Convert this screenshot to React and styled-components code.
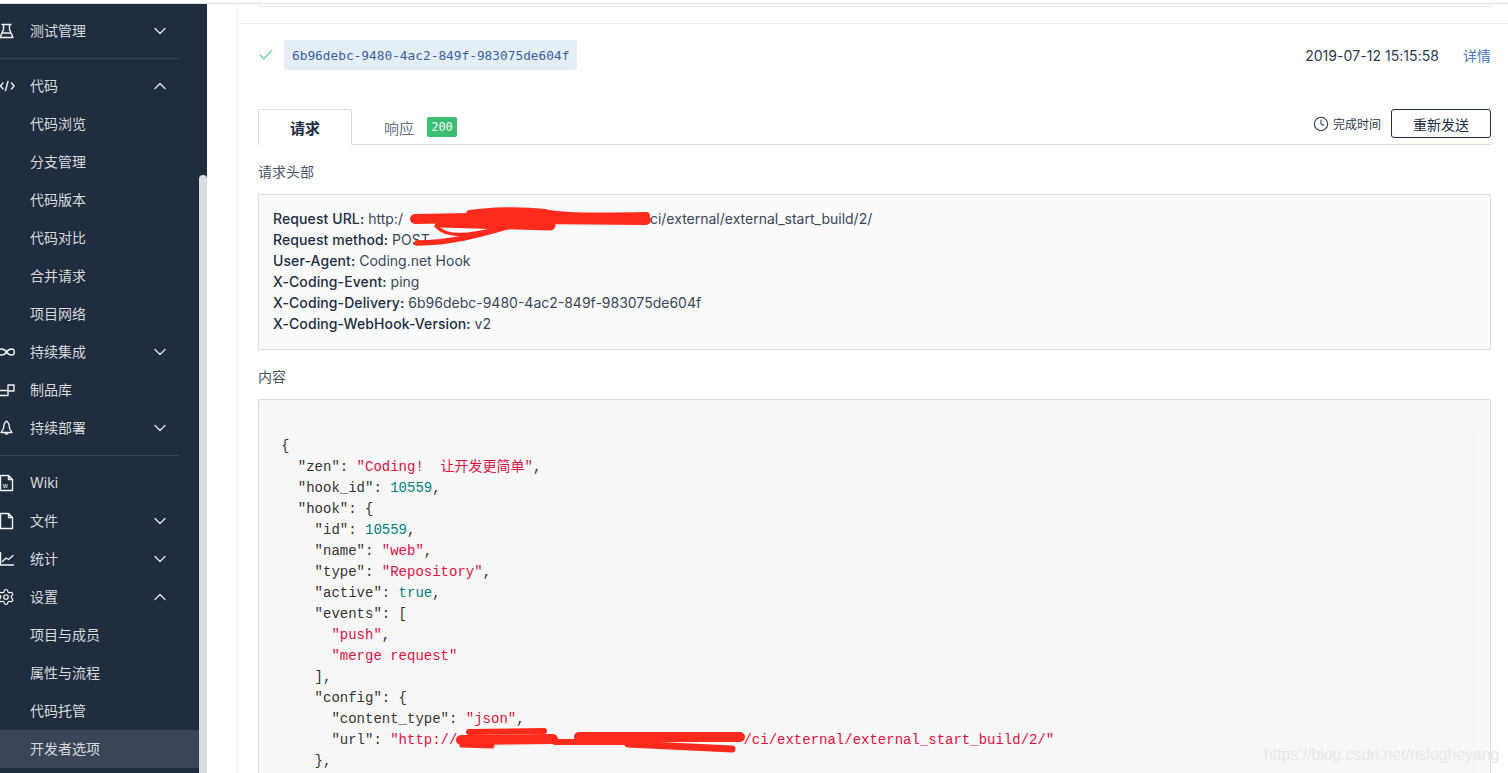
import React from 'react';
import styled, { createGlobalStyle } from 'styled-components';
import { Check, ChevronDown, ChevronUp, Clock, Settings } from 'lucide-react';

const GlobalStyle = createGlobalStyle`
    html, body {
        margin: 0;
        padding: 0;
        height: 773px;
        overflow: hidden;
        background: #fff;
    }
    * {
        box-sizing: border-box;
    }
    body {
        font-family: Inter, "Noto Sans CJK SC", sans-serif;
        color: #2c3a4d;
    }
`;

const Page = styled.div`
    position: relative;
    display: flex;
    flex-direction: column;
    width: 1508px;
    height: 773px;
    overflow: hidden;
`;

const TopEdge = styled.div`
    flex: none;
    height: 4px;
    border-bottom: 1px solid #e1e3e7;
`;

const Body = styled.div`
    flex: 1;
    display: flex;
    min-height: 0;
`;

const Sidebar = styled.aside`
    flex: none;
    display: flex;
    width: 207px;
    background: #202d3f;
`;

const Nav = styled.nav`
    flex: 1;
    padding-top: 8px;
    min-width: 0;
`;

const ScrollTrack = styled.div`
    flex: none;
    width: 8px;
    padding-top: 171px;
`;

const ScrollThumb = styled.div`
    height: 100%;
    background: #d9dde3;
    border-radius: 4px 4px 0 0;
`;

const NavRow = styled.div`
    display: flex;
    align-items: center;
    height: 38px;
    padding-right: 29px;
    font-size: 14px;
    color: #d6dade;
    background: ${p => (p.$active ? '#3a4658' : 'transparent')};
`;

const NavIcon = styled.span`
    flex: none;
    display: flex;
    width: 18px;
    height: 18px;
    margin-left: -3px;
    margin-right: 15px;
    color: #f1f3f5;
`;

const NavIndent = styled.span`
    flex: none;
    width: 30px;
`;

const NavLabel = styled.span`
    flex: 1;
    padding-bottom: 2px;
`;

const NavDivider = styled.div`
    width: 179px;
    height: 1px;
    margin: 8px 0;
    background: #3a4657;
`;

const Main = styled.main`
    flex: 1;
    min-width: 0;
    margin-left: 30px;
    border-left: 1px solid #f1f2f4;
`;

const PrevCardEnd = styled.div`
    height: 3px;
    margin: 0 17px 0 20px;
    border: 1px solid #e3e6ea;
    border-top: none;
    border-radius: 0 0 2px 2px;
`;

const RowDivider = styled.div`
    height: 1px;
    margin-top: 16px;
    background: #f1f2f4;
`;

const Content = styled.div`
    padding: 0 17px 0 20px;
`;

const DeliveryRow = styled.div`
    display: flex;
    align-items: center;
    padding: 16px 0 39px;
`;

const StatusCheck = styled(Check)`
    flex: none;
    margin-left: -1px;
    margin-right: 9px;
    color: #32c27a;
`;

const DeliveryId = styled.code`
    display: flex;
    align-items: center;
    height: 30px;
    padding: 0 8px;
    border-radius: 2px;
    background: #e4eef8;
    color: #3d5f9f;
    font-family: "DejaVu Sans Mono", monospace;
    font-size: 12.8px;
`;

const DeliveryTime = styled.span`
    margin-left: auto;
    font-size: 14px;
    letter-spacing: 0.05px;
    color: #2c3a4d;
`;

const DetailLink = styled.a`
    margin-left: 24px;
    font-size: 14px;
    color: #4a78b8;
`;

const TabBar = styled.div`
    display: flex;
    align-items: flex-start;
    height: 36px;
    border-bottom: 1px solid #d8dde4;
`;

const ActiveTab = styled.div`
    display: flex;
    align-items: center;
    justify-content: center;
    width: 94px;
    height: 36px;
    border: 1px solid #d8dde4;
    border-bottom: 1px solid #fff;
    border-radius: 2px 2px 0 0;
    background: #fff;
    font-size: 15px;
    font-weight: 700;
    color: #202d3f;
`;

const Tab = styled.div`
    display: flex;
    align-items: center;
    gap: 13px;
    height: 36px;
    padding-left: 32px;
    font-size: 15px;
    color: #6b7480;
`;

const StatusBadge = styled.span`
    display: flex;
    align-items: center;
    justify-content: center;
    width: 30px;
    height: 20px;
    border-radius: 2px;
    background: #3bbd73;
    color: #f2fbf6;
    font-family: "DejaVu Sans Mono", monospace;
    font-size: 12px;
`;

const TabActions = styled.div`
    display: flex;
    align-items: center;
    margin-left: auto;
    height: 29px;
`;

const FinishTime = styled.span`
    display: flex;
    align-items: center;
    gap: 4px;
    font-size: 12px;
    color: #2c3a4d;
`;

const ResendButton = styled.button`
    width: 100px;
    height: 29px;
    margin-left: 10px;
    border: 1px solid #202d3f;
    border-radius: 3px;
    background: #fff;
    font-family: inherit;
    font-size: 14px;
    color: #202d3f;
`;

const SectionLabel = styled.div`
    margin: 17px 0 12px;
    font-size: 14px;
    line-height: 20px;
    color: #4a5565;
`;

const HeaderBox = styled.div`
    position: relative;
    height: 156px;
    padding: 13px 14px;
    border: 1px solid #dadfe6;
    border-radius: 2px;
    background: #f9fafb;
`;

const HeaderLine = styled.div`
    font-size: 14px;
    line-height: 21px;
    color: #3a4656;
    white-space: nowrap;
`;

const HeaderName = styled.b`
    font-weight: 500;
    letter-spacing: 0.1px;
    color: #202d3f;
`;

const Hidden = styled.span`
    display: inline-block;
    width: ${p => p.$w}px;
`;

const CodeBox = styled.div`
    position: relative;
    height: 500px;
    padding: 28px 14px 14px;
    border: 1px solid #dadfe6;
    border-radius: 2px;
    background: #f8f8f8;
`;

const CodeBlock = styled.div`
    padding: 8px;
    background: #f7f7f7;
    font-family: "Liberation Mono", "Noto Sans CJK SC", monospace;
    font-size: 14px;
    color: #333;
`;

const CodeLine = styled.div`
    height: 21px;
    line-height: 21px;
    padding-left: ${p => p.$indent * 8.4}px;
    white-space: pre;
`;

const Str = styled.span`
    color: #dd1144;
`;

const Num = styled.span`
    color: #008080;
`;

const Scribble = styled.svg`
    position: absolute;
    left: ${p => p.$x}px;
    top: ${p => p.$y}px;
    fill: none;
    stroke: #fe2a1c;
    stroke-linecap: round;
    stroke-linejoin: round;
`;

const Watermark = styled.div`
    position: absolute;
    left: 1264px;
    top: 746px;
    font-family: "Liberation Sans", sans-serif;
    font-size: 15.8px;
    line-height: 18px;
    color: #e7e7e7;
    white-space: nowrap;
`;

const Svg = ({ children }) => (
    <svg width="18" height="18" viewBox="0 0 18 18" fill="none" stroke="currentColor" strokeWidth="1.4" strokeLinecap="round" strokeLinejoin="round">
        {children}
    </svg>
);

const icons = {
    flask: <Svg><path d="M5 2.500h9M6.500 2.500v5L3 15.500h13L12.500 7.500v-5M5 11h9" /></Svg>,
    code: <Svg><path d="M6 6L3.500 9 6 12M14.500 6L17 9l-2.500 3M11 4.500L8.500 13.500" /></Svg>,
    loop: <Svg><path d="M9.500 9C8 6.800 6.500 6 4.500 6a3 3 0 0 0 0 6c2 0 3.500-.800 5-3 1.500-2.200 3-3 5-3a3 3 0 0 1 0 6c-2 0-3.500-.800-5-3z" /></Svg>,
    box: <Svg><path d="M11 4h6v6h-6zM1 9.500h10v5H1z" /></Svg>,
    rocket: <Svg><path d="M9.500 2C7 4 6.500 7 6.500 9.500L4 13.500h11L12.500 9.500C12.500 7 12 4 9.500 2zM8 13.500a1.500 1.500 0 0 0 3 0" /></Svg>,
    wiki: (
        <Svg>
            <path d="M3.500 1.500h8l4 4v11h-12zM11.500 1.500v4h4" />
            <text x="5.800" y="13.500" fontSize="7" fontFamily="Liberation Sans" fill="currentColor" stroke="none">w</text>
        </Svg>
    ),
    file: <Svg><path d="M3.500 1.500h8l4 4v11h-12zM11.500 1.500v4h4" /></Svg>,
    chart: <Svg><path d="M3.500 2.500v12.500h13M5.500 11.500l3.500-3.500 2.500 1.500 4.500-4" /></Svg>,
    gear: <Settings size={18} strokeWidth={1.6} />,
};

const navGroups = [
    [{ label: '测试管理', icon: 'flask', arrow: 'down' }],
    [
        { label: '代码', icon: 'code', arrow: 'up' },
        { label: '代码浏览' },
        { label: '分支管理' },
        { label: '代码版本' },
        { label: '代码对比' },
        { label: '合并请求' },
        { label: '项目网络' },
        { label: '持续集成', icon: 'loop', arrow: 'down' },
        { label: '制品库', icon: 'box' },
        { label: '持续部署', icon: 'rocket', arrow: 'down' },
    ],
    [
        { label: 'Wiki', icon: 'wiki' },
        { label: '文件', icon: 'file', arrow: 'down' },
        { label: '统计', icon: 'chart', arrow: 'down' },
        { label: '设置', icon: 'gear', arrow: 'up' },
        { label: '项目与成员' },
        { label: '属性与流程' },
        { label: '代码托管' },
        { label: '开发者选项', active: true },
    ],
];

const NavItem = ({ item }) => (
    <NavRow $active={item.active}>
        {item.icon ? <NavIcon>{icons[item.icon]}</NavIcon> : <NavIndent />}
        <NavLabel>{item.label}</NavLabel>
        {item.arrow === 'down' && <ChevronDown size={20} strokeWidth={1.8} />}
        {item.arrow === 'up' && <ChevronUp size={20} strokeWidth={1.8} />}
    </NavRow>
);

const App = () => (
    <Page>
        <GlobalStyle />
        <TopEdge />
        <Body>
            <Sidebar>
                <Nav>
                    {navGroups.map((group, i) => (
                        <React.Fragment key={i}>
                            {i > 0 && <NavDivider />}
                            {group.map(item => <NavItem key={item.label} item={item} />)}
                        </React.Fragment>
                    ))}
                </Nav>
                <ScrollTrack><ScrollThumb /></ScrollTrack>
            </Sidebar>
            <Main>
                <PrevCardEnd />
                <RowDivider />
                <Content>
                    <DeliveryRow>
                        <StatusCheck size={18} strokeWidth={1.4} />
                        <DeliveryId>6b96debc-9480-4ac2-849f-983075de604f</DeliveryId>
                        <DeliveryTime>2019-07-12 15:15:58</DeliveryTime>
                        <DetailLink>详情</DetailLink>
                    </DeliveryRow>
                    <TabBar>
                        <ActiveTab>请求</ActiveTab>
                        <Tab>响应<StatusBadge>200</StatusBadge></Tab>
                        <TabActions>
                            <FinishTime><Clock size={16} strokeWidth={1.6} />完成时间</FinishTime>
                            <ResendButton>重新发送</ResendButton>
                        </TabActions>
                    </TabBar>
                    <SectionLabel>请求头部</SectionLabel>
                    <HeaderBox>
                        <HeaderLine><HeaderName>Request URL:</HeaderName> http:/<Hidden $w={247} />ci/external/external_start_build/2/</HeaderLine>
                        <HeaderLine><HeaderName>Request method:</HeaderName> POST</HeaderLine>
                        <HeaderLine><HeaderName>User-Agent:</HeaderName> Coding.net Hook</HeaderLine>
                        <HeaderLine><HeaderName>X-Coding-Event:</HeaderName> ping</HeaderLine>
                        <HeaderLine><HeaderName>X-Coding-Delivery:</HeaderName> 6b96debc-9480-4ac2-849f-983075de604f</HeaderLine>
                        <HeaderLine><HeaderName>X-Coding-WebHook-Version:</HeaderName> v2</HeaderLine>
                        <Scribble $x={147} $y={9} width="254" height="42" viewBox="406 204 254 42">
                            <path strokeWidth="10" d="M415 219L470 218L530 219L646 220" />
                            <path strokeWidth="8" d="M470 214C490 211 520 210 545 213C560 217 600 217 646 216" />
                            <path strokeWidth="11" d="M440 222L550 225" />
                            <path strokeWidth="3.500" d="M436 226C445 237 465 237 495 229" />
                            <path strokeWidth="5.500" d="M417 243C450 243 480 235 510 226" />
                        </Scribble>
                    </HeaderBox>
                    <SectionLabel>内容</SectionLabel>
                    <CodeBox>
                        <CodeBlock>
                            <CodeLine $indent={0}>{'{'}</CodeLine>
                            <CodeLine $indent={2}>"zen": <Str>"Coding!  让开发更简单"</Str>,</CodeLine>
                            <CodeLine $indent={2}>"hook_id": <Num>10559</Num>,</CodeLine>
                            <CodeLine $indent={2}>"hook": {'{'}</CodeLine>
                            <CodeLine $indent={4}>"id": <Num>10559</Num>,</CodeLine>
                            <CodeLine $indent={4}>"name": <Str>"web"</Str>,</CodeLine>
                            <CodeLine $indent={4}>"type": <Str>"Repository"</Str>,</CodeLine>
                            <CodeLine $indent={4}>"active": <Num>true</Num>,</CodeLine>
                            <CodeLine $indent={4}>"events": [</CodeLine>
                            <CodeLine $indent={6}><Str>"push"</Str>,</CodeLine>
                            <CodeLine $indent={6}><Str>"merge request"</Str></CodeLine>
                            <CodeLine $indent={4}>],</CodeLine>
                            <CodeLine $indent={4}>"config": {'{'}</CodeLine>
                            <CodeLine $indent={6}>"content_type": <Str>"json"</Str>,</CodeLine>
                            <CodeLine $indent={6}>"url": <Str>"http://<Hidden $w={286} />/ci/external/external_start_build/2/"</Str></CodeLine>
                            <CodeLine $indent={4}>{'},'}</CodeLine>
                        </CodeBlock>
                        <Scribble $x={194} $y={326} width="295" height="30" viewBox="453 726 295 30">
                            <path strokeWidth="6" d="M469 732L544 731" />
                            <path strokeWidth="10" d="M461 740L553 739" />
                            <path strokeWidth="5" d="M462 745L492 746" />
                            <path strokeWidth="10" d="M579 737L740 737" />
                            <path strokeWidth="6" d="M555 742L626 742" />
                            <path strokeWidth="7" d="M628 744L732 749" />
                        </Scribble>
                    </CodeBox>
                </Content>
            </Main>
        </Body>
        <Watermark>https://blog.csdn.net/nslogheyang</Watermark>
    </Page>
);

export default App;
